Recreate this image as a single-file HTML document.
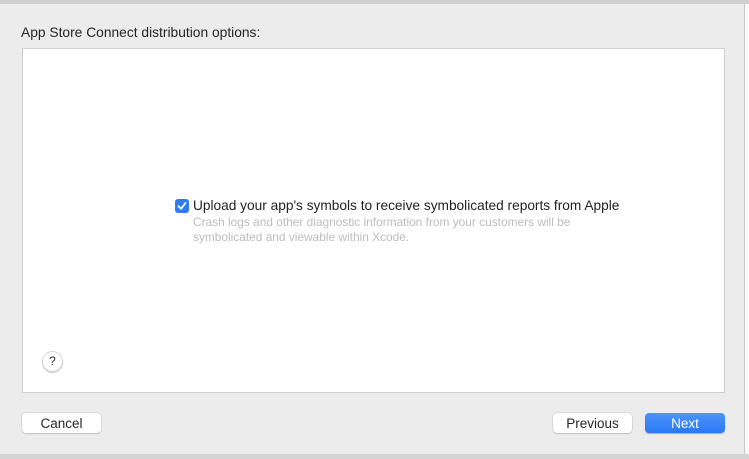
<!DOCTYPE html>
<html><head><style>
body{margin:0;width:749px;height:459px;overflow:hidden;background:#f4f4f4;font-family:"Liberation Sans",sans-serif;position:relative}
.top{position:absolute;left:0;top:0;width:749px;height:4px;background:#cfcfcf}
.bot{position:absolute;left:0;top:454px;width:749px;height:5px;background:#d4d4d4}
.dlg{position:absolute;left:0;top:4px;width:744px;height:450px;background:#ececec;border-right:1px solid #c8c8c8}
.title{position:absolute;left:21px;top:25px;font-size:13.8px;color:#262626}
.panel{position:absolute;left:22px;top:48px;width:701px;height:343px;background:#fff;border:1px solid #cfcfcf}
.cb{position:absolute;left:175px;top:199px;width:14px;height:14px;border-radius:3px;background:#2f7bf5}
.main{position:absolute;left:193px;top:198px;font-size:13.7px;color:#222}
.sub{position:absolute;left:193px;top:215px;font-size:11.9px;line-height:15px;color:#bcbcbc}
.help{position:absolute;left:42px;top:351px;width:19px;height:19px;border-radius:50%;background:#fff;border:1px solid #d4d4d4;box-shadow:0 1px 1px #ccc;font-size:12px;text-align:center;line-height:19px;color:#333}
.btn{position:absolute;top:413px;height:20px;width:79px;background:#fff;border-radius:4px;box-shadow:0 0 0 0.5px #c4c4c4,0 1px 1px #bbb;font-size:13.5px;text-align:center;line-height:21px;color:#262626}
.next{background:linear-gradient(#4d94fb,#2a78f5);color:#fff;box-shadow:0 1px 1px #aaa}
.edge{position:absolute;left:745px;top:4px;width:4px;height:450px;background:#fafafa}
</style></head><body>
<div class="top"></div>
<div class="dlg">
</div>
<div class="edge"></div>
<div class="bot"></div>
<div class="title">App Store Connect distribution options:</div>
<div class="panel"></div>
<div class="cb"><svg width="14" height="14"><path d="M3.5 7.2 L6 9.8 L10.5 4" stroke="#fff" stroke-width="1.8" fill="none" stroke-linecap="round" stroke-linejoin="round"/></svg></div>
<div class="main">Upload your app's symbols to receive symbolicated reports from Apple</div>
<div class="sub">Crash logs and other diagnostic information from your customers will be<br>symbolicated and viewable within Xcode.</div>
<div class="help">?</div>
<div class="btn" style="left:22px">Cancel</div>
<div class="btn" style="left:553px">Previous</div>
<div class="btn next" style="left:645px;width:80px">Next</div>
</body></html>
